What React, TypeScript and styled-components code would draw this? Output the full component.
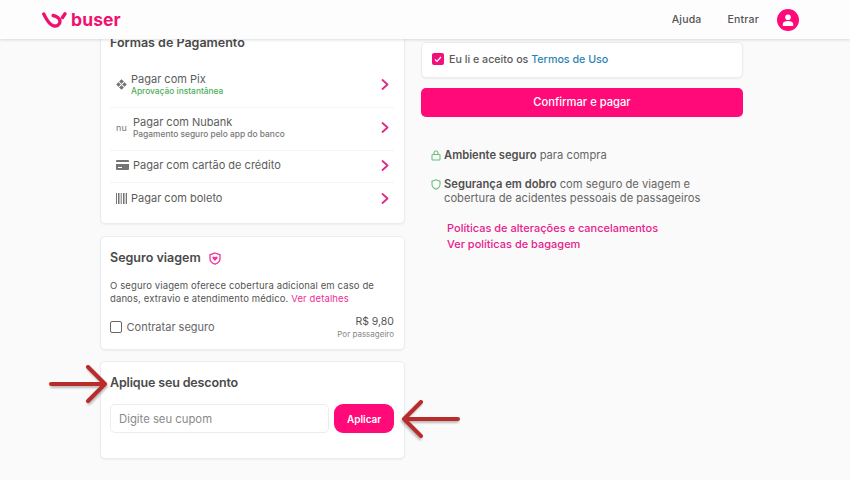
import React from 'react';
import styled, { createGlobalStyle } from 'styled-components';

const GlobalStyle = createGlobalStyle`
  html, body {
    margin: 0;
    height: 480px;
    overflow: hidden;
    background: #fafafa;
    font-family: Inter, "Open Sans", sans-serif;
    color: #4e4e4e;
  }
`;

const PixIcon = () => (
    <svg width="11" height="11" viewBox="0 0 11 11" fill="#757575" stroke="#757575" strokeWidth="0.6" strokeLinejoin="round">
        <path d="M5.5.6 7.6 2.500 5.500 4.500 3.400 2.500zM5.500 6.500 7.600 8.500 5.500 10.400 3.400 8.500zM2.500 3.400 4.500 5.500 2.500 7.600.6 5.500zM8.500 3.400 10.400 5.500 8.500 7.600 6.500 5.500z" />
    </svg>
);

const CardIcon = () => (
    <svg width="13" height="10" viewBox="0 0 13 10" fill="#757575">
        <path d="M1 0h11a1 1 0 0 1 1 1v1H0V1a1 1 0 0 1 1-1zM0 4h13v5a1 1 0 0 1-1 1H1a1 1 0 0 1-1-1zm2 3v1h4V7z" fillRule="evenodd" />
    </svg>
);

const BarcodeIcon = () => (
    <svg width="11" height="11" viewBox="0 0 11 11" fill="#757575">
        <path d="M0 0h1v11H0zM2 0h1.500v11H2zM4.700 0h1v11h-1zM7 0h1.500v11H7zM9.700 0h1.300v11H9.700z" />
    </svg>
);

const Chevron = () => (
    <ChevronSvg width="8" height="11" viewBox="0 0 8 11">
        <path d="M1.500 1 6.500 5.500 1.500 10" />
    </ChevronSvg>
);

const RedArrow = ({ flip }: { flip?: boolean }) => (
    <ArrowSvg width="60" height="40" viewBox="0 0 60 40" $flip={flip}>
        <path d="M2 20H56M39 3 56 20 39 37" />
    </ArrowSvg>
);

const App = () => {
    return (
        <>
            <GlobalStyle />
            <Header>
                <Logo>
                    <svg width="25" height="16" viewBox="0 0 25 16" fill="none" stroke="#f2106f" strokeWidth="3.400" strokeLinecap="round" strokeLinejoin="round">
                        <path d="M1.800 2C4 6.500 6.500 12.500 11.500 13.800c3.500.8 6.500-1.300 6.500-4.300 0-3-3.500-5.300-6.800-6" />
                        <path d="M20.500 5.500 23 1.800" />
                    </svg>
                    <LogoText>buser</LogoText>
                </Logo>
                <Nav>
                    <NavLink>Ajuda</NavLink>
                    <NavLink>Entrar</NavLink>
                    <Avatar>
                        <svg width="12" height="12" viewBox="0 0 12 12" fill="#fff">
                            <circle cx="6" cy="3.200" r="2.800" />
                            <path d="M0.800 12V10c0-2 2.400-3 5.200-3s5.200 1 5.200 3v2z" />
                        </svg>
                    </Avatar>
                </Nav>
            </Header>
            <Main>
                <LeftColumn>
                    <PaymentCard>
                        <CardTitle>Formas de Pagamento</CardTitle>
                        <PaymentList>
                            <PaymentRow $height={43}>
                                <IconSlot><PixIcon /></IconSlot>
                                <RowText>
                                    <RowLabel>Pagar com Pix</RowLabel>
                                    <RowHint $green>Aprovação instantânea</RowHint>
                                </RowText>
                                <Chevron />
                            </PaymentRow>
                            <PaymentRow $height={43}>
                                <IconSlot $wide><NuMark>nu</NuMark></IconSlot>
                                <RowText>
                                    <RowLabel>Pagar com Nubank</RowLabel>
                                    <RowHint>Pagamento seguro pelo app do banco</RowHint>
                                </RowText>
                                <Chevron />
                            </PaymentRow>
                            <PaymentRow $height={32}>
                                <IconSlot $wide><CardIcon /></IconSlot>
                                <RowText>
                                    <RowLabel>Pagar com cartão de crédito</RowLabel>
                                </RowText>
                                <Chevron />
                            </PaymentRow>
                            <PaymentRow $height={33} $last>
                                <IconSlot><BarcodeIcon /></IconSlot>
                                <RowText>
                                    <RowLabel>Pagar com boleto</RowLabel>
                                </RowText>
                                <Chevron />
                            </PaymentRow>
                        </PaymentList>
                    </PaymentCard>

                    <InsuranceCard>
                        <TitleRow>
                            <CardTitle>Seguro viagem</CardTitle>
                            <svg width="12" height="13" viewBox="0 0 12 13">
                                <path d="M6 1 11 2.800V6.500c0 2.800-2.200 4.800-5 5.700-2.800-.9-5-2.900-5-5.700V2.800z" fill="none" stroke="#f2359a" strokeWidth="1.300" />
                                <path d="M6 9 3.500 6.300C2.800 5 4.800 3.800 6 5.200 7.200 3.800 9.200 5 8.500 6.300z" fill="#f2359a" />
                            </svg>
                        </TitleRow>
                        <InsuranceText>
                            O seguro viagem oferece cobertura adicional em caso de danos, extravio e atendimento médico. <PinkText>Ver detalhes</PinkText>
                        </InsuranceText>
                        <InsuranceFooter>
                            <CheckLabel>
                                <EmptyBox />
                                Contratar seguro
                            </CheckLabel>
                            <PriceBlock>
                                <Price>R$ 9,80</Price>
                                <PriceNote>Por passageiro</PriceNote>
                            </PriceBlock>
                        </InsuranceFooter>
                    </InsuranceCard>

                    <DiscountCard>
                        <ArrowLeft><RedArrow /></ArrowLeft>
                        <DiscountTitle>Aplique seu desconto</DiscountTitle>
                        <CouponRow>
                            <CouponInput placeholder="Digite seu cupom" />
                            <ApplyButton>Aplicar</ApplyButton>
                        </CouponRow>
                        <ArrowRight><RedArrow flip /></ArrowRight>
                    </DiscountCard>
                </LeftColumn>

                <RightColumn>
                    <TermsCard>
                        <CheckedBox>
                            <svg width="8" height="7" viewBox="0 0 8 7" fill="none" stroke="#fff" strokeWidth="1.200">
                                <path d="M1 3.500 3 5.500 7 1" />
                            </svg>
                        </CheckedBox>
                        <span>Eu li e aceito os <TermsLink>Termos de Uso</TermsLink></span>
                    </TermsCard>
                    <ConfirmButton>Confirmar e pagar</ConfirmButton>
                    <SafetyList>
                        <SafetyItem>
                            <svg width="10" height="11" viewBox="0 0 10 11" fill="none" stroke="#6cc07a" strokeWidth="1.100">
                                <rect x="1" y="4.500" width="8" height="5.500" rx="0.800" />
                                <path d="M3 4.500V3a2 2 0 0 1 4 0v1.500" />
                            </svg>
                            <span><strong>Ambiente seguro</strong> para compra</span>
                        </SafetyItem>
                        <SafetyItem>
                            <svg width="10" height="11" viewBox="0 0 10 11" fill="none" stroke="#6cc07a" strokeWidth="1.100">
                                <path d="M5 .8 9 2.200V5.500c0 2.300-1.800 3.800-4 4.700-2.200-.9-4-2.400-4-4.700V2.200z" />
                            </svg>
                            <span><strong>Segurança em dobro</strong> com seguro de viagem e cobertura de acidentes pessoais de passageiros</span>
                        </SafetyItem>
                    </SafetyList>
                    <PolicyLinks>
                        <PolicyLink>Políticas de alterações e cancelamentos</PolicyLink>
                        <PolicyLink>Ver políticas de bagagem</PolicyLink>
                    </PolicyLinks>
                </RightColumn>
            </Main>
        </>
    );
};

export default App;

const Header = styled.header`
  position: relative;
  z-index: 2;
  height: 39px;
  padding: 0 51px 0 42px;
  display: flex;
  align-items: center;
  justify-content: space-between;
  background: #fdfdfd;
  box-shadow: 0 1px 3px rgba(0, 0, 0, 0.14);
`;

const Logo = styled.div`
  display: flex;
  align-items: center;
  gap: 4px;
`;

const LogoText = styled.span`
  font-size: 17.5px;
  font-weight: 700;
  color: #f2106f;
  letter-spacing: 0.1px;
  line-height: 20px;
`;

const Nav = styled.nav`
  display: flex;
  align-items: center;
`;

const NavLink = styled.a`
  font-size: 10.5px;
  font-weight: 500;
  color: #555;
  margin-right: 26px;
  letter-spacing: 0.2px;

  &:nth-child(2) {
    margin-right: 18px;
  }
`;

const Avatar = styled.div`
  width: 22px;
  height: 22px;
  border-radius: 50%;
  background: #ff0a78;
  display: flex;
  align-items: center;
  justify-content: center;
`;

const Main = styled.main`
  display: flex;
  align-items: flex-start;
  gap: 16px;
  padding-left: 100px;
`;

const LeftColumn = styled.div`
  width: 305px;
  margin-top: -16px;
  display: flex;
  flex-direction: column;
  gap: 12px;
`;

const RightColumn = styled.div`
  width: 322px;
  padding-top: 3px;
`;

const Card = styled.section`
  background: #fff;
  border: 1px solid #ebecef;
  border-radius: 5px;
  box-sizing: border-box;
  box-shadow: 0 1px 2px rgba(0, 0, 0, 0.05);
`;

const PaymentCard = styled(Card)`
  padding: 11px 10px 7px 9px;
`;

const CardTitle = styled.h2`
  margin: 0;
  font-size: 12.5px;
  line-height: 16px;
  font-weight: 600;
  color: #4a4a4a;
`;

const DiscountTitle = styled(CardTitle)`
  letter-spacing: -0.15px;
`;

const PaymentList = styled.div`
  margin-top: 14px;
`;

const PaymentRow = styled.div<{ $height: number; $last?: boolean }>`
  height: ${(p) => p.$height}px;
  padding: 0 5px 3px 6px;
  box-sizing: border-box;
  display: flex;
  align-items: center;
  border-bottom: ${(p) => (p.$last ? 'none' : '1px solid #f4f4f4')};
`;

const IconSlot = styled.div<{ $wide?: boolean }>`
  width: ${(p) => (p.$wide ? 17 : 15)}px;
  flex-shrink: 0;
  display: flex;
  align-items: center;
`;

const NuMark = styled.span`
  font-size: 9px;
  color: #777;
  letter-spacing: 0.3px;
`;

const RowText = styled.div`
  flex: 1;
  display: flex;
  flex-direction: column;
`;

const RowLabel = styled.span`
  font-size: 11px;
  line-height: 13px;
  color: #5c5c5c;
`;

const RowHint = styled.span<{ $green?: boolean }>`
  font-size: 8.4px;
  line-height: 10px;
  font-weight: 500;
  color: ${(p) => (p.$green ? '#4caf5a' : '#777')};
`;

const ChevronSvg = styled.svg`
  fill: none;
  stroke: #e02a86;
  stroke-width: 1.8;
  stroke-linecap: round;
  stroke-linejoin: round;
`;

const InsuranceCard = styled(Card)`
  height: 114px;
  padding: 13px 10px 0 9px;
`;

const TitleRow = styled.div`
  display: flex;
  align-items: center;
  gap: 8px;
`;

const InsuranceText = styled.p`
  margin: 13px 0 0;
  font-size: 9.5px;
  line-height: 13px;
  letter-spacing: 0.12px;
  color: #555;
`;

const PinkText = styled.span`
  color: #ee2e93;
`;

const InsuranceFooter = styled.div`
  margin-top: 10px;
  display: flex;
  justify-content: space-between;
  align-items: center;
`;

const CheckLabel = styled.label`
  display: flex;
  align-items: center;
  gap: 5px;
  font-size: 11px;
  color: #666;
`;

const EmptyBox = styled.span`
  width: 9.5px;
  height: 9.5px;
  border: 1.3px solid #666;
  border-radius: 2px;
`;

const PriceBlock = styled.div`
  text-align: right;
`;

const Price = styled.div`
  font-size: 10.5px;
  line-height: 14px;
  color: #555;
`;

const PriceNote = styled.div`
  font-size: 8px;
  line-height: 10px;
  color: #888;
`;

const DiscountCard = styled(Card)`
  position: relative;
  height: 98px;
  margin-top: -1px;
  padding: 13px 10px 0 9px;
`;

const ArrowLeft = styled.div`
  position: absolute;
  left: -52px;
  top: 2px;
`;

const ArrowRight = styled.div`
  position: absolute;
  left: 299px;
  top: 37px;
`;

const ArrowSvg = styled.svg<{ $flip?: boolean }>`
  fill: none;
  stroke: #b92c2c;
  stroke-width: 4;
  stroke-linecap: round;
  stroke-linejoin: round;
  filter: drop-shadow(1px 2px 1px rgba(0, 0, 0, 0.25));
  transform: ${(p) => (p.$flip ? 'scaleX(-1)' : 'none')};
`;

const CouponRow = styled.div`
  margin-top: 13px;
  display: flex;
  gap: 5px;
`;

const CouponInput = styled.input`
  width: 220px;
  height: 29px;
  box-sizing: border-box;
  padding: 0 8px;
  border: 1px solid #ececec;
  border-radius: 5px;
  font-family: inherit;
  font-size: 11.3px;
  outline: none;

  &::placeholder {
    color: #8a8a8a;
  }
`;

const ApplyButton = styled.button`
  width: 60px;
  height: 29px;
  border: none;
  border-radius: 9px;
  background: #ff0a78;
  color: #fff;
  font-family: inherit;
  font-size: 10px;
  font-weight: 600;
`;

const TermsCard = styled(Card)`
  height: 36px;
  padding: 0 10px 2px;
  display: flex;
  align-items: center;
  gap: 5px;
  font-size: 10.7px;
  font-weight: 500;
  color: #5a5a5a;
`;

const CheckedBox = styled.span`
  width: 12px;
  height: 12px;
  border-radius: 2px;
  background: #f0107a;
  display: flex;
  align-items: center;
  justify-content: center;
`;

const TermsLink = styled.a`
  color: #2b83b5;
`;

const ConfirmButton = styled.button`
  display: block;
  width: 100%;
  height: 29px;
  margin-top: 10px;
  padding-bottom: 2px;
  border: none;
  border-radius: 5px;
  background: #ff0a78;
  color: #fff;
  font-family: inherit;
  font-size: 11.2px;
  font-weight: 500;
`;

const SafetyList = styled.div`
  margin-top: 31px;
  padding-left: 10px;
  display: flex;
  flex-direction: column;
  gap: 15px;
`;

const SafetyItem = styled.div`
  display: flex;
  align-items: flex-start;
  gap: 3px;
  font-size: 11.2px;
  line-height: 14px;
  color: #666;
  width: 285px;

  svg {
    flex-shrink: 0;
    margin-top: 2px;
  }

  strong {
    font-weight: 600;
    color: #505050;
  }
`;

const PolicyLinks = styled.div`
  margin-top: 16px;
  padding-left: 26px;
  display: flex;
  flex-direction: column;
  gap: 2px;
`;

const PolicyLink = styled.a`
  font-size: 11px;
  line-height: 14px;
  font-weight: 500;
  color: #e8218c;
`;
